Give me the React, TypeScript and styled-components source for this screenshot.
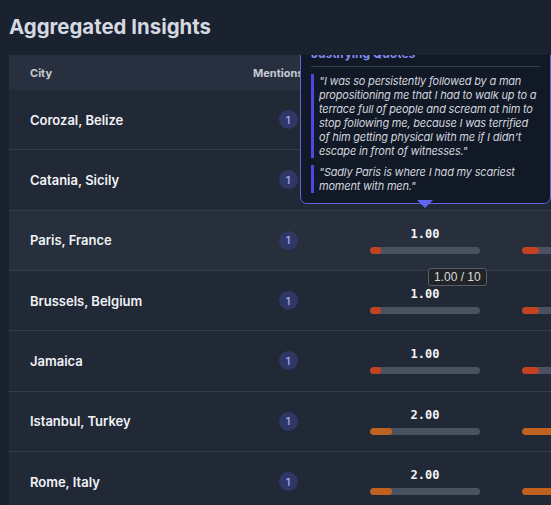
import React from "react";
import styled, { createGlobalStyle } from "styled-components";

const GlobalStyle = createGlobalStyle`
  html, body {
    margin: 0;
    padding: 0;
    background: #1a212f;
    overflow: hidden;
  }
  body {
    font-family: Inter, "Noto Sans", "Liberation Sans", sans-serif;
    -webkit-font-smoothing: antialiased;
  }
`;

const Page = styled.div`
  width: 551px;
  height: 505px;
  padding: 15px 0 0 9px;
  box-sizing: border-box;
  overflow: hidden;
`;

const Title = styled.h1`
  margin: 0 0 16px;
  font-size: 20.4px;
  line-height: 24px;
  font-weight: 700;
  color: #d5d9e0;
`;

const TableWrap = styled.div`
  position: relative;
  width: 820px;
  height: 460px;
  overflow: hidden;
  background: #212836;
`;

const Row = styled.div<{ $head?: boolean; $hover?: boolean }>`
  display: grid;
  grid-template-columns: 223px 112px 162px 142px 1fr;
  align-items: center;
  box-sizing: border-box;
  height: ${(p) => (p.$head ? "35px" : "60.33px")};
  background: ${(p) => (p.$head ? "#283040" : p.$hover ? "#272f3d" : "transparent")};
  border-bottom: ${(p) => (p.$head ? "none" : "1px solid #343b4a")};
`;

const HeadCell = styled.div`
  padding-left: 21px;
  font-size: 11px;
  font-weight: 700;
  color: #c6cad2;
  white-space: nowrap;
`;

const CityCell = styled.div`
  padding-left: 21px;
  font-size: 13px;
  font-weight: 600;
  color: #f1f3f6;
`;

const MentionCell = styled.div`
  display: flex;
  justify-content: center;
`;

const Badge = styled.span`
  width: 19px;
  height: 19px;
  border-radius: 50%;
  background: #2f3766;
  color: #a3adf3;
  font-size: 11px;
  font-weight: 500;
  display: flex;
  align-items: center;
  justify-content: center;
`;

const ScoreCell = styled.div`
  position: relative;
  align-self: stretch;
  display: flex;
  flex-direction: column;
  align-items: center;
  justify-content: center;
  gap: 6px;
  padding-top: 1px;
`;

const ScoreValue = styled.span`
  font-family: "DejaVu Sans Mono", "Liberation Mono", monospace;
  font-size: 12px;
  line-height: 13px;
  font-weight: 700;
  color: #f3f4f6;
`;

const Track = styled.div`
  width: 110px;
  height: 7px;
  border-radius: 4px;
  background: #4a5262;
  overflow: hidden;
`;

const Fill = styled.div<{ $tone: "red" | "orange" }>`
  height: 100%;
  border-radius: 4px;
  background: ${(p) => (p.$tone === "red" ? "#c4421f" : "#c1611f")};
`;

const Popover = styled.div`
  position: absolute;
  left: -44px;
  bottom: calc(100% + 7px);
  width: 251px;
  box-sizing: border-box;
  padding: 10px 10px 10px;
  background: #111826;
  border: 1px solid #5f63e0;
  border-radius: 7px;
  z-index: 5;
  text-align: left;
`;

const Arrow = styled.span`
  position: absolute;
  left: 116px;
  bottom: -5px;
  width: 0;
  height: 0;
  border-left: 8px solid transparent;
  border-right: 8px solid transparent;
  border-top: 8px solid #6366f1;
`;

const PopTitle = styled.div`
  font-size: 12px;
  line-height: 14px;
  font-weight: 700;
  color: #838cf0;
  padding-bottom: 5px;
  border-bottom: 1px solid #363d4b;
  margin-bottom: 7px;
`;

const Quote = styled.blockquote`
  margin: 0;
  padding-left: 5px;
  border-left: 3px solid #4f46e5;
  font-size: 11px;
  line-height: 14px;
  letter-spacing: -0.2px;
  font-style: italic;
  color: #d1d5dc;
  & + & {
    margin-top: 7px;
  }
`;

const ValueTip = styled.div`
  position: absolute;
  left: 84px;
  top: 57px;
  z-index: 6;
  padding: 1px 5px;
  background: #202328;
  border: 1px solid #5a5d63;
  border-radius: 3px;
  font-family: "Liberation Sans", Arial, sans-serif;
  font-size: 12px;
  line-height: 14px;
  color: #dcdcdc;
  white-space: nowrap;
`;

type City = {
  name: string;
  mentions: number;
  severity: number;
  frequency: number;
};

const cities: City[] = [
  { name: "Corozal, Belize", mentions: 1, severity: 1, frequency: 1.5 },
  { name: "Catania, Sicily", mentions: 1, severity: 1, frequency: 1.5 },
  { name: "Paris, France", mentions: 1, severity: 1, frequency: 1.5 },
  { name: "Brussels, Belgium", mentions: 1, severity: 1, frequency: 1.5 },
  { name: "Jamaica", mentions: 1, severity: 1, frequency: 1.5 },
  { name: "Istanbul, Turkey", mentions: 1, severity: 2, frequency: 3 },
  { name: "Rome, Italy", mentions: 1, severity: 2, frequency: 3 },
];

const quotes = [
  "\"I was so persistently followed by a man propositioning me that I had to walk up to a terrace full of people and scream at him to stop following me, because I was terrified of him getting physical with me if I didn't escape in front of witnesses.\"",
  "\"Sadly Paris is where I had my scariest moment with men.\"",
];

function Score({ value, children }: { value: number; children?: React.ReactNode }) {
  return (
    <ScoreCell>
      <ScoreValue>{value.toFixed(2)}</ScoreValue>
      <Track>
        <Fill $tone={value < 2 ? "red" : "orange"} style={{ width: `${value * 10}%` }} />
      </Track>
      {children}
    </ScoreCell>
  );
}

export default function App() {
  const hovered = 2;
  return (
    <Page>
      <GlobalStyle />
      <Title>Aggregated Insights</Title>
      <TableWrap>
        <Row $head>
          <HeadCell>City</HeadCell>
          <HeadCell>Mentions</HeadCell>
          <HeadCell>Severity</HeadCell>
          <HeadCell>Frequency</HeadCell>
          <div />
        </Row>
        {cities.map((c, i) => (
          <Row key={c.name} $hover={i === hovered}>
            <CityCell>{c.name}</CityCell>
            <MentionCell>
              <Badge>{c.mentions}</Badge>
            </MentionCell>
            <Score value={c.severity}>
              {i === hovered && (
                <>
                  <Popover>
                    <PopTitle>Justifying Quotes</PopTitle>
                    {quotes.map((q) => (
                      <Quote key={q}>{q}</Quote>
                    ))}
                    <Arrow />
                  </Popover>
                  <ValueTip>{c.severity.toFixed(2)} / 10</ValueTip>
                </>
              )}
            </Score>
            <Score value={c.frequency} />
            <div />
          </Row>
        ))}
      </TableWrap>
    </Page>
  );
}
